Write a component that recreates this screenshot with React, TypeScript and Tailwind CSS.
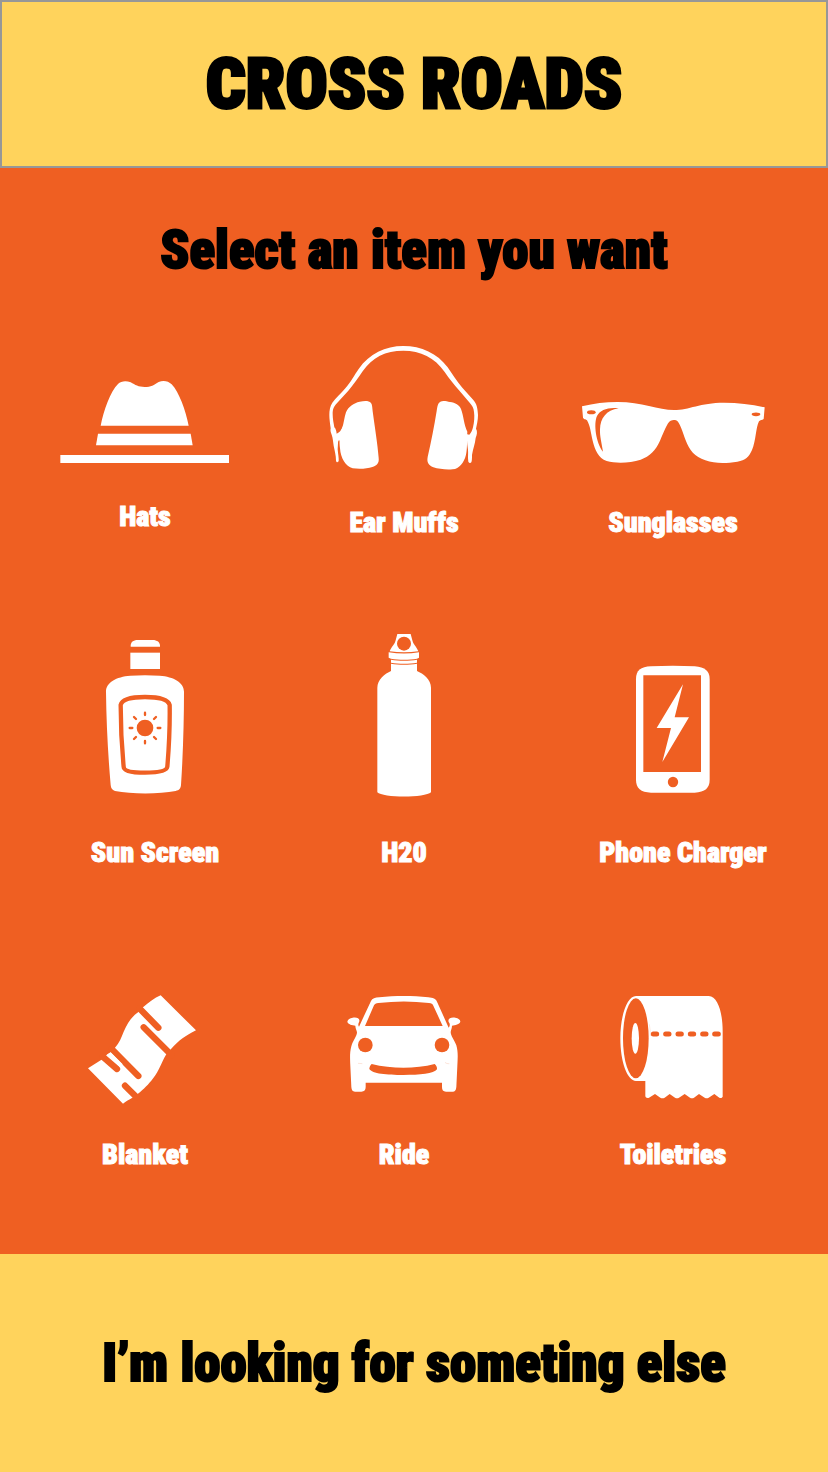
import type { ReactNode } from "react";

type Item = {
  label: string;
  width: number;
  height: number;
  viewBox: string;
  art: ReactNode;
  indent?: boolean;
};

const ORANGE = "#ef5f22";

const items: Item[] = [
  {
    label: "Hats",
    width: 190,
    height: 134,
    viewBox: "0 -60 570 402",
    art: (
      <>
        <path d="M152 197C161 151 181 95 204 72C213 63 228 61 242 67C256 75 265 81 284 81C303 81 312 75 326 66C340 60 355 63 365 73C387 96 407 151 416 197Z" />
        <path d="M144 221H422L428 256H138Z" />
        <path d="M31 285H537V309H31Z" />
      </>
    ),
  },
  {
    label: "Ear Muffs",
    width: 190,
    height: 140,
    viewBox: "-3 15 570 420",
    art: (
      <>
        <path d="M62 280C60 265 58 252 58 240C58 226 60 213 67 203C78 188 93 175 106 160C124 139 132 122 146 102C178 56 226 33 280 33C334 33 382 55 413 97C428 118 439 138 457 158L490 195C500 206 503 220 504 240C504 256 500 272 498 281C503 289 501 299 497 309C495 328 489 341 486 360C486 370 486 377 484 382C481 385 477 384 475 380C473 368 475 355 474 344C473 335 471 324 471 315C471 309 471 304 469 299C472 297 474 299 478 299C484 293 487 285 489 277C493 260 494 245 492 231C491 219 487 212 479 203L447 166C432 149 418 131 404 111C374 67 332 47 280 47C226 47 187 67 158 109C144 130 132 147 115 167L82 203C72 213 68 221 68 237C68 252 71 264 73 277C78 282 79 289 80 296L87 292C92 288 95 282 98 274L103 310L91 318C86 312 84 318 84 325L83 343C84 357 87 369 86 379C83 383 79 382 78 377C78 361 74 347 71 332C69 320 69 310 65 299C61 290 61 285 62 280Z" />
        <path d="M96 281C102 264 103 246 108 232C114 215 132 204 149 200C164 197 176 196 183 204C187 209 187 220 188 229C194 274 203 329 206 369C208 385 200 392 187 396C171 402 145 402 128 400C107 394 92 370 90 340C88 322 87 298 96 281Z" />
        <path d="M391 200C399 196 410 199 420 201C436 203 448 210 453 222C461 243 462 270 472 290C470 317 473 337 468 359C462 383 448 401 428 403C409 405 386 402 370 397C355 390 350 382 353 366C363 323 373 271 380 228C382 217 383 204 391 200Z" />
      </>
    ),
  },
  {
    label: "Sunglasses",
    width: 190,
    height: 140,
    viewBox: "24 -150 570 420",
    art: (
      <>
        <path d="M36 49C72 40 105 36 143 36C215 36 265 60 312 60C358 60 390 38 462 38C505 38 544 43 584 52L581 87C576 91 571 89 567 94C557 114 558 153 546 180C536 202 527 210 502 215C467 221 434 221 406 211C374 201 358 180 347 151C338 128 329 94 318 91C313 90 307 90 302 92C291 97 280 130 270 152C258 180 239 199 212 209C180 219 140 221 110 213C85 204 75 180 68 152C62 128 61 108 51 91C48 86 44 90 39 83Z" />
        <ellipse cx="64" cy="67" rx="13" ry="6" fill={ORANGE} />
        <ellipse cx="558" cy="73" rx="13" ry="5.5" fill={ORANGE} />
        <path d="M146 55C115 51 90 60 81 78C70 101 78 159 99 185C95 159 89 139 90 118C91 85 108 61 146 55Z" fill={ORANGE} />
      </>
    ),
  },
  {
    label: "Sun Screen",
    width: 120,
    height: 180,
    viewBox: "-15 0 360 540",
    indent: true,
    art: (
      <>
        <path d="M122 50C121 36 130 30 143 30H188C201 30 211 36 210 50Z" />
        <path d="M121 68H210V117H121Z" />
        <path d="M121 137C149 135 181 135 209 137C252 140 283 158 282 187C282 275 279 375 273 465C272 476 268 480 257 483C207 493 125 493 75 483C66 480 63 475 62 465C54 375 49 275 48 187C47 158 78 140 121 137Z" />
        <path d="M92 225C96 207 126 201 165 201C204 201 234 207 239 225C240 288 237 350 232 410C231 424 202 428 165 428C128 428 101 424 101 410C95 350 92 288 92 225Z" fill="none" stroke={ORANGE} strokeWidth="13" />
        <circle cx="165" cy="294" r="25" fill={ORANGE} />
        <path d="M165 248V255M165 333V340M119 294H127M203 294H211M132 261L138 267M192 321L198 327M198 261L192 267M138 321L132 327" stroke={ORANGE} strokeWidth="7" strokeLinecap="round" />
      </>
    ),
  },
  {
    label: "H20",
    width: 90,
    height: 180,
    viewBox: "-3 15 270 540",
    art: (
      <>
        <path d="M112 27H152L157 46C159 57 170 66 175 79C147 83 117 83 89 79C94 66 105 57 107 46Z" />
        <circle cx="132" cy="56" r="21" fill={ORANGE} />
        <path d="M86 82C117 87 147 87 177 82V98L171 101C147 105 117 105 93 101L86 98Z" />
        <path d="M93 104C117 108 147 108 171 104V113C147 117 117 117 93 113Z" />
        <path d="M93 116C117 120 147 120 171 116V138C190 146 213 164 213 188V502C196 519 68 519 52 502V188C52 164 75 146 93 138Z" />
      </>
    ),
  },
  {
    label: "Phone Charger",
    width: 120,
    height: 180,
    viewBox: "69 -75 360 540",
    indent: true,
    art: (
      <>
        <path d="M138 73C138 45 152 36 183 34C225 32 272 32 314 34C345 36 359 48 359 73V374C359 399 345 411 314 413H183C152 411 138 400 138 374Z" />
        <path d="M160 61H333V351H160Z" fill={ORANGE} />
        <circle cx="249" cy="381" r="15.500" fill={ORANGE} />
        <path d="M279 88L254 187H297L217 321L243 219H200Z" />
      </>
    ),
  },
  {
    label: "Blanket",
    width: 120,
    height: 152,
    viewBox: "15 -75 360 456",
    art: (
      <>
        <path d="M242 31L348 136C316 152 298 165 271 194L258 209C242 237 238 256 220 279C205 299 192 312 173 327L157 338C147 344 138 348 129 356L24 250L68 222L82 208L92 202L105 188C118 173 124 158 131 140C142 115 155 95 175 81L189 67C206 52 223 39 242 31Z" />
        <path d="M178 70L235 128M191 127L275 211M68 215L111 252M95 192L175 273M135 302L170 337" fill="none" stroke={ORANGE} strokeWidth="19" strokeLinecap="round" />
        <path d="M82 209L92 202L128 238L120 247Z" />
      </>
    ),
  },
  {
    label: "Ride",
    width: 120,
    height: 152,
    viewBox: "27 -75 360 456",
    art: (
      <>
        <path d="M108 48C112 40 120 38 133 37C180 32 233 32 280 37C294 38 302 41 306 50L341 128C346 121 345 116 341 111C337 99 350 96 361 98C370 99 376 104 376 110C373 118 361 120 351 122C351 130 348 134 347 141C347 153 359 166 364 181C370 202 368 221 367 243L364 306C363 316 360 320 353 320H333C324 320 321 315 321 306V293H92V306C92 315 88 320 79 320H60C52 320 50 315 49 306L46 243C45 221 44 202 49 184C54 166 66 154 66 142C65 135 61 130 61 122C52 121 39 118 37 110C38 103 45 99 53 98C64 96 75 99 73 109C71 115 68 119 72 125Z" />
        <path d="M117 61C119 57 123 55 130 54C181 48 232 48 282 54C289 55 293 57 295 62L323 123H90Z" fill={ORANGE} />
        <circle cx="91" cy="180" r="22" fill={ORANGE} />
        <circle cx="321" cy="180" r="22" fill={ORANGE} />
        <path d="M110 237C171 252 240 252 299 237C303 240 307 247 306 253C297 266 254 270 205 270C156 270 111 266 103 252C103 247 106 241 110 237Z" fill={ORANGE} />
        <path d="M69 235L82 236M330 232C334 236 338 236 343 236" fill="none" stroke={ORANGE} strokeOpacity="0.25" strokeWidth="2" />
      </>
    ),
  },
  {
    label: "Toiletries",
    width: 120,
    height: 152,
    viewBox: "24 -75 360 456",
    art: (
      <>
        <path d="M93 33H311C339 34 353 84 353 139V335C351 339 347 340 343 338L328 327L311 338Q305 341 299 338L282 327L267 338Q261 341 255 338L239 327L222 338Q216 341 210 338L194 327L179 338Q172 341 166 338L150 327L132 338C127 340 121 338 121 333V288H93C67 288 46 231 46 160C46 90 67 33 93 33Z" />
        <ellipse cx="92.500" cy="160" rx="38.500" ry="120" fill={ORANGE} />
        <ellipse cx="91" cy="160" rx="11" ry="46" />
        <path d="M145 147H155M182 147H192M219 147H229M256 147H266M293 147H303M329 147H340" fill="none" stroke={ORANGE} strokeWidth="15" strokeLinecap="round" />
        <path d="M133 118Q137 139 136 153" fill="none" stroke={ORANGE} strokeOpacity="0.2" strokeWidth="2" />
      </>
    ),
  },
];

function ItemButton({ item }: { item: Item }) {
  return (
    <button type="button" className="flex cursor-pointer flex-col items-center gap-7">
      <svg width={item.width} height={item.height} viewBox={item.viewBox} fill="white" aria-hidden="true">
        {item.art}
      </svg>
      <span className={item.indent ? "pl-5" : ""}>{item.label}</span>
    </button>
  );
}

export default function App() {
  return (
    <div className="flex min-h-screen flex-col bg-[#ef5f22] font-['Roboto_Condensed','Open_Sans_Condensed',sans-serif] font-black text-black">
      <header className="border-2 border-[#979797] bg-[#ffd35c] py-10 text-center">
        <h1 className="text-[70px] leading-[84px] [-webkit-text-stroke:3px_currentColor]">CROSS ROADS</h1>
      </header>
      <main className="pt-12 pb-[84px]">
        <h2 className="text-center text-[53px] leading-[68px] [-webkit-text-stroke:2px_currentColor]">
          Select an item you want
        </h2>
        <div className="mt-14 grid grid-cols-[254fr_264fr_274fr] items-start gap-y-[92px] px-[18px] text-[28px] leading-[30px] text-white [-webkit-text-stroke:1px_currentColor]">
          {items.map((item) => (
            <ItemButton key={item.label} item={item} />
          ))}
        </div>
      </main>
      <footer className="flex grow bg-[#ffd35c]">
        <button
          type="button"
          className="grow cursor-pointer py-16 text-[53px] leading-[68px] [-webkit-text-stroke:2px_currentColor]"
        >
          I’m looking for someting else
        </button>
      </footer>
    </div>
  );
}
